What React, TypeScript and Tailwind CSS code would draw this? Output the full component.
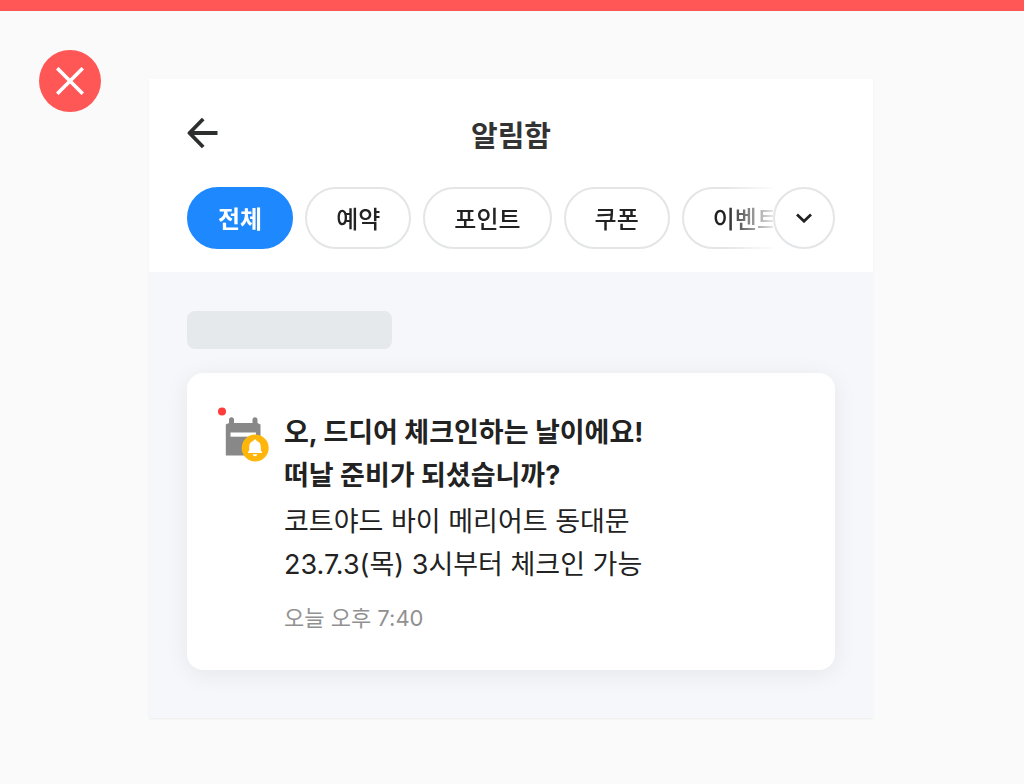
/**
 * Notification inbox example
 * Shows the filter chips and a check-in notification card, marked as a "don't" pattern
 */

import React, { useState } from 'react';

const filters = ['전체', '예약', '포인트', '쿠폰', '이벤트'];

function DontBadge(): React.ReactElement {
  return (
    <div
      role="img"
      aria-label="잘못된 예"
      className="mt-[39px] flex size-[62px] shrink-0 items-center justify-center rounded-full bg-[#ff5656]"
    >
      <svg viewBox="0 0 28 28" className="size-7" fill="none" stroke="white" strokeWidth="3.6">
        <path d="M1.2 1.2 26.8 26.8M26.8 1.2 1.2 26.8" />
      </svg>
    </div>
  );
}

function NotificationIcon(): React.ReactElement {
  return (
    <svg viewBox="0 0 51 55" className="h-[55px] w-[51px] shrink-0" aria-hidden="true">
      {/* Calendar */}
      <g fill="#888888">
        <path d="M11 16v-3.200a2.500 2.500 0 0 1 5 0V16h18.500v-3.200a2.500 2.500 0 0 1 5 0V16l3 1.500V48.500H7.800V17.500Z" />
      </g>
      <rect x="12.5" y="25.500" width="25.5" height="4.200" fill="white" />
      {/* Bell */}
      <circle cx="37.2" cy="41" r="13.5" fill="#ffb60a" />
      <path
        d="M37 32.500c.9 0 1.500.600 1.600 1.400 2.700.700 4.200 3 4.200 5.700v3.800l1.200 1.500v1H30v-1l1.200-1.500v-3.800c0-2.700 1.500-5 4.200-5.700.1-.8.7-1.400 1.600-1.400Z"
        fill="white"
      />
      <path d="M34.800 47.300h4.400a2.200 2 0 0 1-4.400 0Z" fill="white" />
      {/* Unread dot */}
      <circle cx="4" cy="4.5" r="4" fill="#ff3b3b" />
    </svg>
  );
}

function NotificationCard(): React.ReactElement {
  return (
    <article className="mt-6 flex gap-[15px] rounded-2xl bg-white pt-[34px] pr-8 pb-9 pl-[31px] shadow-[0_4px_24px_rgba(0,0,0,0.07)]">
      <NotificationIcon />
      <div className="min-w-0 flex-1 pt-1 text-[27px] leading-[43px] text-[#222222]">
        <h2 className="font-bold">
          오, 드디어 체크인하는 날이에요!
          <br />
          떠날 준비가 되셨습니까?
        </h2>
        <p className="mt-[3px]">
          코트야드 바이 메리어트 동대문
          <br />
          23.7.3(목) 3시부터 체크인 가능
        </p>
        <p className="mt-4 text-[22px] leading-8 text-[#919191]">오늘 오후 7:40</p>
      </div>
    </article>
  );
}

export default function App(): React.ReactElement {
  const [active, setActive] = useState('전체');

  return (
    <div className="min-h-screen border-t-[11px] border-[#ff5656] bg-[#fafafa] font-[Inter,'Noto_Sans_CJK_KR',sans-serif]">
      <div className="flex gap-12 pr-[151px] pb-16 pl-[39px]">
        <DontBadge />

        <main className="mt-[68px] min-w-0 flex-1 bg-[#f5f7fb] shadow-[0_1px_2px_rgba(0,0,0,0.06)]">
          <header className="bg-white px-[38px] pt-[38px] pb-[23px]">
            <div className="grid grid-cols-[1fr_auto_1fr] items-start">
              <button type="button" aria-label="뒤로" className="justify-self-start">
                <svg
                  viewBox="0 0 31 32"
                  className="h-8 w-[31px]"
                  fill="none"
                  stroke="#2d2f2f"
                  strokeWidth="3.8"
                  strokeLinejoin="round"
                >
                  <path d="M30.5 16H2.5M16.2 2 2.5 16l13.7 14" />
                </svg>
              </button>
              <h1 className="text-[29px] leading-10 font-semibold text-[#333333]">알림함</h1>
            </div>

            {/* Filters */}
            <div className="mt-[30px] flex">
              <div className="flex min-w-0 flex-1 gap-3 overflow-hidden [mask-image:linear-gradient(to_right,black_calc(100%-48px),transparent_calc(100%+6px))]">
                {filters.map((filter) => (
                  <button
                    key={filter}
                    type="button"
                    aria-pressed={filter === active}
                    onClick={() => setActive(filter)}
                    className={`h-[62px] shrink-0 rounded-full border-2 px-[29px] pt-[3px] text-2xl ${
                      filter === active
                        ? 'border-[#1e88ff] bg-[#1e88ff] font-semibold text-white'
                        : 'border-[#e3e5e7] bg-white font-medium text-[#222222]'
                    }`}
                  >
                    {filter}
                  </button>
                ))}
              </div>
              <button
                type="button"
                aria-label="필터 더보기"
                className="flex size-[62px] shrink-0 items-center justify-center rounded-full border-2 border-[#e3e5e7] bg-white"
              >
                <svg viewBox="0 0 16 10" className="h-2.5 w-4" fill="none" stroke="#222222" strokeWidth="2.8">
                  <path d="M1 1.5 8 8.2l7-6.7" />
                </svg>
              </button>
            </div>
          </header>

          <section className="px-[38px] pt-[39px] pb-12">
            <div className="h-[38px] w-[205px] rounded-lg bg-[#e5e9ec]" />
            <NotificationCard />
          </section>
        </main>
      </div>
    </div>
  );
}
